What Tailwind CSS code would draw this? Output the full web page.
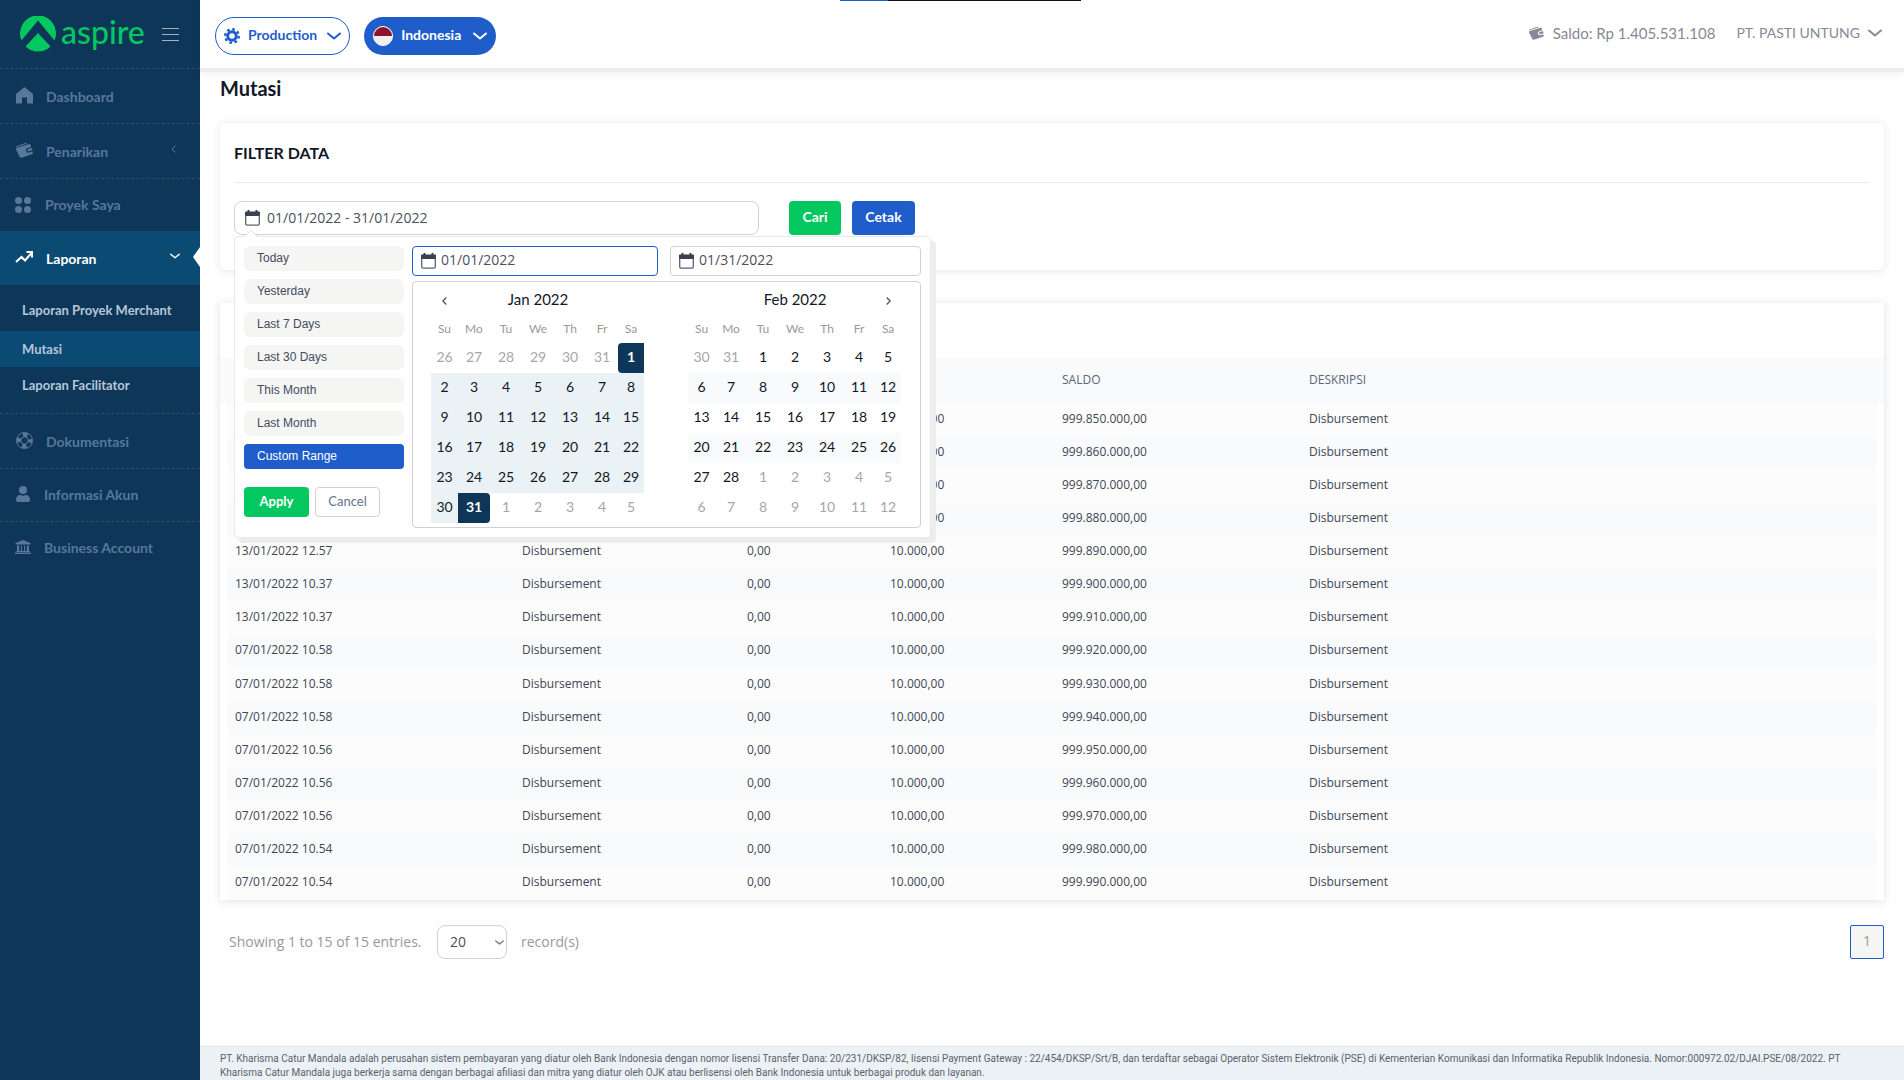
<!DOCTYPE html>
<html lang="id">
<head>
<meta charset="utf-8">
<title>Mutasi - Aspire</title>
<script src="https://cdn.jsdelivr.net/npm/@tailwindcss/browser@4"></script>
</head>
<body class="bg-[#fefefe] font-['Lato',sans-serif] text-[#111827]">
<svg class="hidden">
  <symbol id="wallet" viewBox="0 0 18 16"><path d="M1 4.2 10.5.9c.7-.2 1.300 0 1.600.6L1.300 5.200z"/><path d="M1.200 6 14 2.100c.8-.2 1.400.1 1.600.8l.6 2-3.400 1a2.400 2.400 0 0 0 1.400 4.600l3.300-1 .3 1.100c.2.800-.1 1.300-.9 1.600L6.500 15.700c-.8.200-1.500-.1-1.700-.8L1 7.500z"/><path d="m13.300 6.900 3.600-1.100.7 2.400-3.600 1.100a1.250 1.250 0 0 1-.7-2.400z"/></symbol>
  <symbol id="calendar" viewBox="0 0 15 16"><path fill="#374151" d="M2.500 0h2v1.500h6V0h2v1.500H14c.6 0 1 .4 1 1V6H0V2.500c0-.6.4-1 1-1h1.500z"/><path fill="none" stroke="#5b6175" stroke-width="1.300" d="M.7 5.500v8.300c0 .8.500 1.300 1.300 1.300h11c.8 0 1.300-.5 1.300-1.300V5.500"/></symbol>
  <symbol id="chev" viewBox="0 0 14 8"><path fill="none" stroke="currentColor" stroke-width="2" stroke-linecap="round" stroke-linejoin="round" d="m1 1.500 6 5 6-5"/></symbol>
</svg>

<div class="flex min-h-screen">
  <aside class="w-[200px] shrink-0 bg-[#0d3659] text-sm font-bold text-[#59779a]">
    <div class="flex h-[68px] items-center pl-5 pr-[21px]">
      <a href="#" class="flex items-center gap-[5px] text-[#03c75f]">
        <svg class="size-9" viewBox="0 0 36 36" fill="currentColor"><path d="M1.500 24.500a18 18 0 1 1 33 0L18 4.500z"/><path d="M18 17 30.500 30.500a18 18 0 0 1-25 0z"/></svg>
        <span class="text-[32px] leading-9 font-medium pb-1">aspire</span>
      </a>
      <button aria-label="Menu" class="ml-auto flex w-[17px] flex-col gap-[5px]"><span class="h-px bg-[#a3b3c4]"></span><span class="h-px bg-[#a3b3c4]"></span><span class="h-px bg-[#a3b3c4]"></span></button>
    </div>
    <nav>
      <a href="#" class="flex h-[55px] items-center border-t border-dashed border-[#3a4a60] pl-4 pt-0.5">
        <svg class="mb-1 w-[17px]" viewBox="0 0 17 17" fill="currentColor"><path d="M8.500 0 17 7v9.500h-6v-6H6v6H0V7z"/></svg><span class="pl-[13px]">Dashboard</span></a>
      <a href="#" class="flex h-[55px] items-center border-t border-dashed border-[#3a4a60] pl-[15px] pr-6 pt-0.5">
        <svg class="mb-1 h-4 w-[18px]" fill="currentColor"><use href="#wallet"/></svg><span class="pl-[13px]">Penarikan</span>
        <svg class="mb-1.5 ml-auto h-2 w-[5px]" viewBox="0 0 5 8" fill="none" stroke="currentColor"><path d="M4.500.5 1 4l3.500 3.500"/></svg></a>
      <a href="#" class="flex h-[53px] items-center border-t border-dashed border-[#3a4a60] pl-[15px]">
        <svg class="w-4" viewBox="0 0 16 16" fill="currentColor"><circle cx="3.500" cy="3.500" r="3.500"/><circle cx="12.500" cy="3.500" r="3.500"/><circle cx="3.500" cy="12.500" r="3.500"/><circle cx="12.500" cy="12.500" r="3.500"/></svg><span class="pl-[14px]">Proyek Saya</span></a>
      <a href="#" class="relative flex h-[54px] items-center bg-[#0b4b73] pl-[15px] pr-5 pt-0.5 text-white">
        <svg class="mb-1 w-[18px]" viewBox="0 0 18 12" fill="none" stroke="currentColor" stroke-width="2"><path d="M1 11 6.500 6l3.500 3.500L16.500 2M11.500 1H17v5.500"/></svg><span class="pl-[13px]">Laporan</span>
        <svg class="mb-1.5 ml-auto h-[6px] w-[10px]"><use href="#chev"/></svg>
        <svg class="absolute right-0 top-4 h-5 w-[7px]" viewBox="0 0 7 20"><path fill="#fefefe" d="M7 0v20L0 10z"/></svg></a>
      <div class="flex h-32 flex-col pt-[7px] text-[13px] leading-9 text-[#b5c6d8]">
        <a href="#" class="mb-[3px] h-9 pl-[22px]">Laporan Proyek Merchant</a>
        <a href="#" class="h-9 bg-[#0b4b73] pl-[22px]">Mutasi</a>
        <a href="#" class="h-9 pl-[22px]">Laporan Facilitator</a>
      </div>
      <a href="#" class="flex h-[55px] items-center border-t border-dashed border-[#3a4a60] pl-4 pt-0.5">
        <svg class="mb-1 w-[17px]" viewBox="0 0 17 17" fill="none" stroke="currentColor"><circle cx="8.500" cy="8.500" r="8"/><circle cx="8.500" cy="8.500" r="3.700"/><g stroke-width="4.200" stroke-dasharray="4.500 4.340" stroke-dashoffset="2.250"><circle cx="8.500" cy="8.500" r="5.630"/></g></svg><span class="pl-[13px]">Dokumentasi</span></a>
      <a href="#" class="flex h-[53px] items-center border-t border-dashed border-[#3a4a60] pl-4">
        <svg class="mb-0.5 w-[14px]" viewBox="0 0 14 16" fill="currentColor"><circle cx="7" cy="4" r="4"/><path d="M0 14c0-3 1.500-5 4-5 2 1 4 1 6 0 2.500 0 4 2 4 5 0 1.300-.7 2-2 2H2c-1.300 0-2-.7-2-2z"/></svg><span class="pl-[14px]">Informasi Akun</span></a>
      <a href="#" class="flex h-[53px] items-center border-t border-dashed border-[#3a4a60] pl-[15px]">
        <svg class="mb-0.5 w-4" viewBox="0 0 16 14" fill="currentColor"><path d="m8 0 7.500 3v1.500H.5V3zM2 5.500h2.200V11H6V5.500h1V11h2V5.500h1V11h1.800V5.500H14V11h.8v1H1.200v-1H2zM0 12.500h16V14H0z"/></svg><span class="pl-[13px]">Business Account</span></a>
    </nav>
  </aside>

  <div class="relative flex min-w-0 grow flex-col">
    <div class="absolute left-[640px] top-0 flex h-px w-[241px]"><span class="w-12 bg-[#1f5dcb]"></span><span class="grow bg-[#0f1222]"></span></div>
    <header class="flex h-[68px] items-center bg-white pb-1 pt-2 pl-[15px] pr-[22px] shadow-[0_4px_0_#ededed,0_6px_8px_rgba(0,0,0,0.05)]">
      <button class="flex h-[38px] items-center rounded-full border border-[#1f5dcb] px-2 text-sm font-bold text-[#1f5dcb]">
        <svg class="w-4" viewBox="0 0 16 16"><g fill="none" stroke="currentColor"><circle cx="8" cy="8" r="4.300" stroke-width="3"/><circle cx="8" cy="8" r="6.800" stroke-width="2.400" stroke-dasharray="2.670 2.670"/></g></svg>
        <span class="pl-2 pr-2.5 pb-0.5">Production</span><svg class="h-2 w-[14px]"><use href="#chev"/></svg></button>
      <button class="ml-[14px] flex h-[38px] items-center rounded-full bg-[#1f5dcb] px-[9px] text-sm font-bold text-white">
        <span class="size-5 overflow-hidden rounded-full border border-white bg-[#eee]"><span class="block h-[9px] bg-[#8e1229]"></span></span>
        <span class="pl-2 pr-3 pb-0.5">Indonesia</span><svg class="h-2 w-[14px]"><use href="#chev"/></svg></button>
      <div class="ml-auto flex items-center pb-1.5 text-[#868a96]">
        <svg class="mr-[9px] h-[14px] w-4" fill="currentColor"><use href="#wallet"/></svg>
        <span class="text-[15px]">Saldo: Rp 1.405.531.108</span>
        <button class="ml-[21px] flex items-center gap-2 text-sm">PT. PASTI UNTUNG<svg class="h-2 w-[14px]"><use href="#chev"/></svg></button>
      </div>
    </header>

    <main class="px-5">
      <h1 class="mt-1.5 text-xl leading-7 font-bold">Mutasi</h1>

      <section class="relative mt-[21px] rounded-md bg-white px-[14px] pb-[35px] pt-[19px] shadow-[0_1px_8px_rgba(0,0,0,0.09)]">
        <h2 class="text-base leading-[22px] font-bold">FILTER DATA</h2>
        <hr class="mt-[18px] border-[#ebebeb]">
        <div class="mt-[18px] flex h-[34px]">
          <label class="flex w-[525px] items-center rounded-lg border border-[#d1d1d1] bg-white pl-2.5">
            <svg class="h-4 w-[15px]"><use href="#calendar"/></svg>
            <input aria-label="Rentang tanggal" value="01/01/2022 - 31/01/2022" class="ml-[7px] grow font-['Open_Sans',sans-serif] text-sm text-[#4b5060] outline-none">
          </label>
          <button class="ml-[30px] w-[52px] rounded bg-[#03c75f] pb-0.5 text-sm font-bold text-white">Cari</button>
          <button class="ml-[11px] w-[63px] rounded bg-[#1f5dcb] pb-0.5 text-sm font-bold text-white">Cetak</button>
        </div>

        <!-- date range popup -->
        <div class="absolute left-[14px] top-[113px] z-10 flex w-[697px] gap-2 rounded border border-[#e8e8e8] bg-white px-[9px] pt-[9px] pb-[9px] shadow-[5px_5px_0_#ededed]">
          <svg class="absolute left-[9px] top-[-7px] h-[7px] w-[14px]" viewBox="0 0 14 7"><path d="M0 7 7 .5 14 7" fill="#fff" stroke="#ddd"/></svg>
          <div class="w-40 shrink-0">
            <ul class="flex flex-col gap-2 font-['Liberation_Sans',sans-serif] text-xs text-[#444c5c]">
              <li><button class="h-[25px] w-full rounded-md bg-[#f5f5f4] pb-0.5 pl-[13px] text-left">Today</button></li>
              <li><button class="h-[25px] w-full rounded-md bg-[#f5f5f4] pb-0.5 pl-[13px] text-left">Yesterday</button></li>
              <li><button class="h-[25px] w-full rounded-md bg-[#f5f5f4] pb-0.5 pl-[13px] text-left">Last 7 Days</button></li>
              <li><button class="h-[25px] w-full rounded-md bg-[#f5f5f4] pb-0.5 pl-[13px] text-left">Last 30 Days</button></li>
              <li><button class="h-[25px] w-full rounded-md bg-[#f5f5f4] pb-0.5 pl-[13px] text-left">This Month</button></li>
              <li><button class="h-[25px] w-full rounded-md bg-[#f5f5f4] pb-0.5 pl-[13px] text-left">Last Month</button></li>
              <li><button class="h-[25px] w-full rounded bg-[#1f5dcb] pb-0.5 pl-[13px] text-left font-medium text-white">Custom Range</button></li>
            </ul>
            <div class="mt-[18px] flex gap-1.5 text-[13px]">
              <button class="h-[30px] w-[65px] rounded bg-[#03c75f] font-bold text-white">Apply</button>
              <button class="h-[30px] w-[65px] rounded border border-[#d1d1d1] text-[#64748b]">Cancel</button>
            </div>
          </div>
          <div class="min-w-0 grow">
            <div class="flex h-[30px] gap-3 font-['Open_Sans',sans-serif] text-sm text-[#4b5060]">
              <label class="flex w-[246px] items-center rounded border border-[#1f5dcb] pl-2"><svg class="h-4 w-[15px] shrink-0"><use href="#calendar"/></svg><input aria-label="Tanggal mulai" value="01/01/2022" class="ml-[5px] w-full min-w-0 pb-0.5 outline-none"></label>
              <label class="flex grow items-center rounded border border-[#d1d1d1] pl-2"><svg class="h-4 w-[15px] shrink-0"><use href="#calendar"/></svg><input aria-label="Tanggal akhir" value="01/31/2022" class="ml-[5px] w-full min-w-0 pb-0.5 outline-none"></label>
            </div>
            <div id="cals" class="mt-[5px] flex gap-11 rounded border border-[#d1d1d1] pl-[18px] pb-1 pt-0.5"></div>
          </div>
        </div>
      </section>

      <section class="mt-[33px] bg-white pt-[55px] shadow-[0_1px_8px_rgba(0,0,0,0.12)]">
        <table class="h-[542px] w-full table-fixed border-separate border-spacing-0 text-left font-['Open_Sans',sans-serif] text-xs text-[#3f4654]">
          <colgroup><col class="w-[302px]"><col class="w-[225px]"><col class="w-[143px]"><col class="w-[172px]"><col class="w-[247px]"><col></colgroup>
          <thead><tr class="h-[45px] bg-[#f8fafc] text-[#5b6678]"><th aria-label="Tanggal"></th><th aria-label="Tipe"></th><th aria-label="Debit"></th><th aria-label="Kredit"></th><th class="pb-0.5 font-normal">SALDO</th><th class="pb-0.5 font-normal">DESKRIPSI</th></tr></thead>
          <tbody id="rows"></tbody>
        </table>
      </section>

      <div class="mt-[25px] flex h-[34px] items-center pl-[9px] font-['Open_Sans',sans-serif] text-sm text-[#999]">
        <span class="w-[208px]">Showing 1 to 15 of 15 entries.</span>
        <span class="relative mr-[14px] h-[34px] w-[70px]">
          <select aria-label="Jumlah baris" class="size-full appearance-none rounded-lg border border-[#d1d1d1] bg-white pl-3 text-[#4b5060]"><option>20</option></select>
          <svg class="pointer-events-none absolute right-[3px] top-[15px] h-[5px] w-[9px] text-[#6b7280]"><use href="#chev"/></svg>
        </span>
        <span>record(s)</span>
        <button class="ml-auto h-[34px] w-[34px] rounded-xs border border-[#1f5dcb] bg-[#f5f5f4] pb-0.5 text-[#999]">1</button>
      </div>
    </main>

    <footer class="mt-auto bg-[#ecf1f5] pl-5 pr-[34px] pt-[7px] font-['Roboto',sans-serif] text-[10px] leading-[14px] text-[#5b616b]">PT. Kharisma Catur Mandala adalah perusahan sistem pembayaran yang diatur oleh Bank Indonesia dengan nomor lisensi Transfer Dana: 20/231/DKSP/82, lisensi Payment Gateway : 22/454/DKSP/Srt/B, dan terdaftar sebagai Operator Sistem Elektronik (PSE) di Kementerian Komunikasi dan Informatika Republik Indonesia. Nomor:000972.02/DJAI.PSE/08/2022. PT Kharisma Catur Mandala juga berkerja sama dengan berbagai afiliasi dan mitra yang diatur oleh OJK atau berlisensi oleh Bank Indonesia untuk berbagai produk dan layanan.</footer>
  </div>
</div>

<script>
// Two month grids, Sunday first, six weeks each
const arrow = d => `<button aria-label="${d ? 'Berikutnya' : 'Sebelumnya'}" class="align-middle"><svg class="h-2 w-[5px]" viewBox="0 0 5 8" fill="none" stroke="#4b5060" stroke-width="1.300"><path d="${d ? 'M.7.500 4.200 4 .7 7.500' : 'M4.300.500.8 4l3.500 3.500'}"/></svg></button>`;
function month(title, lead, prevLast, len, jan) {
  let body = '';
  for (let w = 0; w < 6; w++) {
    body += `<tr class="h-[30px] ${!jan && (w === 1 || w === 3) ? 'bg-[#f8fafc]' : ''}">`;
    for (let d = 0; d < 7; d++) {
      const n = w * 7 + d - lead + 1;
      let t = n, c = '';
      if (n < 1) { t = prevLast + n; c = 'text-[#a3a7ad]'; }
      else if (n > len) { t = n - len; c = 'text-[#a3a7ad]'; }
      else if (jan) c = n === 1 ? 'bg-[#0d3659] text-white font-bold rounded-l' : n === 31 ? 'bg-[#0d3659] text-white font-bold rounded-r' : 'bg-[#eaf2f6]';
      body += `<td class="pb-0.5 ${c}">${t}</td>`;
    }
    body += '</tr>';
  }
  const wd = ['Su', 'Mo', 'Tu', 'We', 'Th', 'Fr', 'Sa'].map(x => `<th class="pb-0.5 font-normal">${x}</th>`).join('');
  return `<table class="w-[213px] table-fixed border-separate border-spacing-0 text-center text-sm">
    <colgroup><col class="w-[27px]"><col class="w-8"><col class="w-8"><col class="w-8"><col class="w-8"><col class="w-8"><col class="w-[26px]"></colgroup>
    <thead><tr class="h-8"><th>${jan ? arrow(0) : ''}</th><th colspan="5" class="text-[15px] font-normal">${title}</th><th>${jan ? '' : arrow(1)}</th></tr>
    <tr class="h-[27px] text-xs text-[#999]">${wd}</tr></thead><tbody>${body}</tbody></table>`;
}
document.getElementById('cals').innerHTML = month('Jan 2022', 6, 31, 31, true) + month('Feb 2022', 2, 31, 28, false);

// Transactions: [date, type, debit]
const blank = ['', '', ''];
const entry = t => [t, 'Disbursement', '0,00'];
const data = [blank, blank, blank, blank, ...['13/01/2022 12.57', '13/01/2022 10.37', '13/01/2022 10.37', '07/01/2022 10.58', '07/01/2022 10.58', '07/01/2022 10.58', '07/01/2022 10.56', '07/01/2022 10.56', '07/01/2022 10.56', '07/01/2022 10.54', '07/01/2022 10.54'].map(entry)];
document.getElementById('rows').innerHTML = data.map(([t, k, d], i) => `<tr class="h-[33px] ${i % 2 ? 'bg-[#f8fafc]' : 'bg-[#fcfcfc]'}"><td class="border-l-[7px] border-white pb-0.5 pl-2">${t}</td><td class="pb-0.5">${k}</td><td class="pb-0.5">${d}</td><td class="pb-0.5">10.000,00</td><td class="pb-0.5">999.${850 + i * 10}.000,00</td><td class="border-r-[7px] border-white pb-0.5">Disbursement</td></tr>`).join('');
</script>
</body>
</html>
